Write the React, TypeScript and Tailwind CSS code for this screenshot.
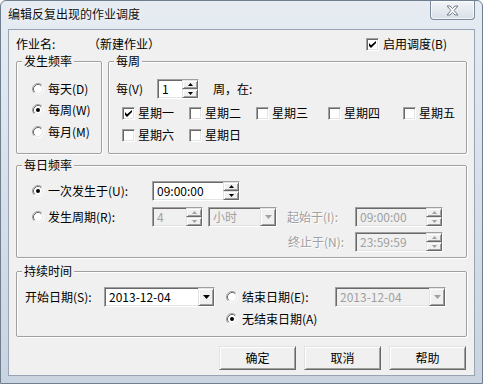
import React from "react";

// classic 3D edges
const sunken =
  "border border-t-[#a0a0a0] border-l-[#a0a0a0] border-b-white border-r-white shadow-[inset_1px_1px_0_#696969,inset_-1px_-1px_0_#e3e3e3]";
const raised =
  "border border-t-[#e3e3e3] border-l-[#e3e3e3] border-b-[#696969] border-r-[#696969] shadow-[inset_1px_1px_0_#fff,inset_-1px_-1px_0_#a0a0a0]";

function Radio({ checked = false }: { checked?: boolean }) {
  return (
    <svg width="12" height="12" viewBox="0 0 12 12" className="shrink-0">
      <circle cx="6" cy="6" r="5" fill="#fff" />
      <path d="M2.11 9.89 A5.5 5.5 0 0 1 9.89 2.11" fill="none" stroke="#a0a0a0" />
      <path d="M9.89 2.11 A5.5 5.5 0 0 1 2.11 9.89" fill="none" stroke="#fff" />
      <path d="M2.82 9.18 A4.5 4.5 0 0 1 9.18 2.82" fill="none" stroke="#696969" />
      <path d="M9.18 2.82 A4.5 4.5 0 0 1 2.82 9.18" fill="none" stroke="#e3e3e3" />
      {checked && <circle cx="6" cy="6" r="2" fill="#000" />}
    </svg>
  );
}

function Check({ checked = false }: { checked?: boolean }) {
  return (
    <span className={`flex h-[13px] w-[13px] shrink-0 items-center justify-center bg-white ${sunken}`}>
      {checked && (
        <svg width="7" height="7" viewBox="0 0 7 7">
          <path d="M0 2v3l2 2 5-5V-0L2 4.2z" fill="#000" />
        </svg>
      )}
    </span>
  );
}

function Arrows({ disabled = false }: { disabled?: boolean }) {
  const c = disabled ? "#a0a0a0" : "#000";
  return (
    <div className="flex h-full w-[16px] shrink-0 flex-col">
      <span className={`flex flex-1 items-center justify-center bg-[#f0f0f0] ${raised}`}>
        <svg width="5" height="3" viewBox="0 0 5 3">
          <path d="M2.5 0 5 3H0z" fill={c} />
        </svg>
      </span>
      <span className={`flex flex-1 items-center justify-center bg-[#f0f0f0] ${raised}`}>
        <svg width="5" height="3" viewBox="0 0 5 3">
          <path d="M0 0h5L2.5 3z" fill={c} />
        </svg>
      </span>
    </div>
  );
}

function SpinBox({ value, w, disabled = false }: { value: string; w: string; disabled?: boolean }) {
  return (
    <div className={`flex h-[20px] ${w} ${sunken} ${disabled ? "bg-[#f0f0f0] text-[#a0a0a0]" : "bg-white text-black"}`}>
      <span className="flex-1 pl-[4px] leading-[18px]">{value}</span>
      <Arrows disabled={disabled} />
    </div>
  );
}

function Combo({ value, w, disabled = false }: { value: string; w: string; disabled?: boolean }) {
  return (
    <div className={`flex h-[20px] ${w} ${sunken} ${disabled ? "bg-[#f0f0f0] text-[#a0a0a0]" : "bg-white text-black"}`}>
      <span className="flex-1 pl-[4px] leading-[18px]">{value}</span>
      <span className={`flex h-full w-[16px] items-center justify-center bg-[#f0f0f0] ${raised}`}>
        <svg width="7" height="4" viewBox="0 0 7 4">
          <path d="M0 0h7L3.5 4z" fill={disabled ? "#a0a0a0" : "#000"} />
        </svg>
      </span>
    </div>
  );
}

function Group({
  title,
  className,
  children,
}: {
  title: string;
  className: string;
  children: React.ReactNode;
}) {
  return (
    <div
      className={`flex flex-col rounded-[2px] border border-[#a0a0a0] shadow-[inset_1px_1px_0_#fff,1px_1px_0_#fff] ${className}`}
    >
      <span className="-mt-[8px] ml-[5px] w-fit bg-[#f0f0f0] px-[2px] leading-[14px]">{title}</span>
      {children}
    </div>
  );
}

function Day({ label, checked = false, w }: { label: string; checked?: boolean; w: string }) {
  return (
    <div className={`flex items-center gap-[3px] ${w}`}>
      <Check checked={checked} />
      <span>{label}</span>
    </div>
  );
}

function Button({ label }: { label: string }) {
  return (
    <button className={`h-[24px] w-[77px] bg-[#f0f0f0] text-[12px] leading-[14px] ${raised}`}>{label}</button>
  );
}

export default function App() {
  return (
    <div className="h-[384px] w-[483px] overflow-hidden rounded-t-[6px] border border-[#6f7f90] bg-gradient-to-b from-[#e6ecf2] via-[#d7e0ea] to-[#c9d4e0] font-['Noto_Sans_CJK_SC',sans-serif] text-[12px] text-black">
      {/* title bar */}
      <div className="flex h-[28px] items-start">
        <span className="mt-[6px] ml-[7px] leading-[14px] text-[#111] [text-shadow:0_0_6px_#fff]">
          编辑反复出现的作业调度
        </span>
        <span className="mr-[7px] ml-auto flex h-[19px] w-[45px] items-center justify-center rounded-b-[4px] border border-t-0 border-[#7d8a99] bg-gradient-to-b from-[#f2f5f8] to-[#d8dfe7] shadow-[inset_0_0_0_1px_rgba(255,255,255,0.7)]">
          <svg width="13" height="11" viewBox="0 0 13 11">
            <path
              d="M1 1h3l2.5 2.6L9 1h3L8 5.5 12 10H9L6.5 7.4 4 10H1l4-4.5z"
              fill="#fff"
              stroke="#6f7b89"
              strokeWidth="1"
              strokeLinejoin="round"
            />
          </svg>
        </span>
      </div>

      {/* client area */}
      <div className="ml-[7px] flex h-[347px] w-[467px] flex-col border border-[#97a4b3] bg-[#f0f0f0] px-[7px] pt-[6px]">
        <div className="flex h-[16px] items-center">
          <span className="w-[72px]">作业名:</span>
          <span>（新建作业）</span>
          <div className="ml-auto flex w-[101px] items-center gap-[4px]">
            <Check checked />
            <span>启用调度(B)</span>
          </div>
        </div>

        <div className="mt-[9px] flex gap-[6px]">
          <Group title="发生频率" className="h-[93px] w-[86px]">
            <div className="mt-[13px] ml-[15px] flex h-[16px] items-center gap-[4px]">
              <Radio />
              <span>每天(D)</span>
            </div>
            <div className="mt-[5px] ml-[15px] flex h-[16px] items-center gap-[4px]">
              <Radio checked />
              <span>每周(W)</span>
            </div>
            <div className="mt-[6px] ml-[15px] flex h-[16px] items-center gap-[4px]">
              <Radio />
              <span>每月(M)</span>
            </div>
          </Group>

          <Group title="每周" className="h-[93px] flex-1">
            <div className="mt-[11px] ml-[7px] flex h-[20px] items-center">
              <span className="w-[41px]">每(V)</span>
              <SpinBox value="1" w="w-[42px]" />
              <span className="ml-[14px]">周，在:</span>
            </div>
            <div className="mt-[6px] ml-[13px] flex h-[16px] items-center">
              <Day label="星期一" checked w="w-[67px]" />
              <Day label="星期二" w="w-[67px]" />
              <Day label="星期三" w="w-[72px]" />
              <Day label="星期四" w="w-[75px]" />
              <Day label="星期五" w="w-[60px]" />
            </div>
            <div className="mt-[6px] ml-[13px] flex h-[16px] items-center">
              <Day label="星期六" w="w-[67px]" />
              <Day label="星期日" w="w-[67px]" />
            </div>
          </Group>
        </div>

        <Group title="每日频率" className="mt-[11px] h-[93px]">
          <div className="mt-[9px] ml-[15px] flex h-[20px] items-center">
            <div className="flex w-[120px] items-center gap-[4px]">
              <Radio checked />
              <span>一次发生于(U):</span>
            </div>
            <SpinBox value="09:00:00" w="w-[88px]" />
          </div>
          <div className="mt-[6px] ml-[15px] flex h-[20px] items-center">
            <div className="flex w-[120px] items-center gap-[4px]">
              <Radio />
              <span>发生周期(R):</span>
            </div>
            <SpinBox value="4" w="w-[51px]" disabled />
            <div className="ml-[5px]">
              <Combo value="小时" w="w-[69px]" disabled />
            </div>
            <span className="ml-[10px] w-[68px] text-[#a0a0a0] [text-shadow:1px_1px_0_#fff]">起始于(I):</span>
            <SpinBox value="09:00:00" w="w-[88px]" disabled />
          </div>
          <div className="mt-[5px] ml-[271px] flex h-[20px] items-center">
            <span className="w-[67px] text-[#a0a0a0] [text-shadow:1px_1px_0_#fff]">终止于(N):</span>
            <SpinBox value="23:59:59" w="w-[88px]" disabled />
          </div>
        </Group>

        <Group title="持续时间" className="mt-[13px] h-[66px]">
          <div className="mt-[9px] ml-[8px] flex h-[20px] items-center">
            <span className="w-[79px]">开始日期(S):</span>
            <Combo value="2013-12-04" w="w-[111px]" />
            <div className="ml-[11px] flex w-[109px] items-center gap-[4px]">
              <Radio />
              <span>结束日期(E):</span>
            </div>
            <Combo value="2013-12-04" w="w-[111px]" disabled />
          </div>
          <div className="mt-[4px] ml-[209px] flex h-[16px] items-center gap-[4px]">
            <Radio checked />
            <span>无结束日期(A)</span>
          </div>
        </Group>

        <div className="mt-[9px] mr-[1px] flex justify-end gap-[8px]">
          <Button label="确定" />
          <Button label="取消" />
          <Button label="帮助" />
        </div>
      </div>
    </div>
  );
}
